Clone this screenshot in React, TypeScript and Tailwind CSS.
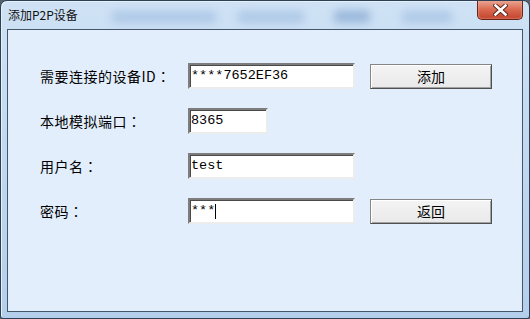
import React from "react";

const cjk = '"Noto Sans CJK SC", "Noto Sans", sans-serif';
const cjkTc = '"Noto Sans CJK TC", "Noto Sans CJK SC", sans-serif';
const mono = '"Liberation Mono", "Noto Sans CJK SC", monospace';

function Field({ w, value, caret }: { w: string; value: string; caret?: boolean }) {
  return (
    <div
      className={`${w} h-[26px] bg-white border-2 border-t-[#7d7d7d] border-l-[#7d7d7d] border-b-[#ececec] border-r-[#ececec] shadow-[inset_1px_1px_0_#4a4a4a] flex items-center pl-[1px] text-[13.5px] text-black leading-none`}
      style={{ fontFamily: mono }}
    >
      <span>{value}</span>
      {caret && <span className="w-px h-[15px] bg-black" />}
    </div>
  );
}

function Btn({ label }: { label: string }) {
  return (
    <button
      className="ml-[15px] w-[122px] h-[25px] bg-gradient-to-b from-[#f4f4f4] to-[#e9e9e9] border border-[#858585] border-b-[#4f4f4f] border-r-[#4f4f4f] shadow-[inset_1px_1px_0_#ffffff,inset_-1px_-1px_0_#a3a3a3] text-[14px] text-black flex items-center justify-center leading-none"
      style={{ fontFamily: cjk }}
    >
      {label}
    </button>
  );
}

function Row({ label, children }: { label: string; children: React.ReactNode }) {
  return (
    <div className="flex items-center h-[26px]">
      <div className="w-[150px] flex items-center text-[14px] text-black leading-none tracking-[0.5px] pl-[2px]" style={{ fontFamily: cjk }}>
        <span>{label}</span>
        <span className="w-[14px] text-center" style={{ fontFamily: cjkTc }}>：</span>
      </div>
      {children}
    </div>
  );
}

export default function App() {
  return (
    <div className="w-[530px] h-[319px] bg-[#55606c]">
      <div className="relative w-full h-full rounded-t-[7px] rounded-b-[3px] border border-[#2e4154] bg-gradient-to-b from-[#cfe2f5] via-[#c0d8f0] to-[#b4cfeb] overflow-hidden flex flex-col shadow-[inset_1px_1px_0_#e6f0fa]">
        {/* blurred background smudges behind glass */}
        <div className="absolute left-[110px] top-[10px] w-[106px] h-[12px] rounded-full bg-[#9ab9de] blur-[4px] opacity-60" />
        <div className="absolute left-[236px] top-[10px] w-[68px] h-[12px] rounded-full bg-[#9ab9de] blur-[4px] opacity-60" />
        <div className="absolute left-[332px] top-[9px] w-[38px] h-[13px] rounded-full bg-[#86a8d2] blur-[4px] opacity-70" />
        <div className="absolute left-[400px] top-[10px] w-[52px] h-[12px] rounded-full bg-[#9ab9de] blur-[4px] opacity-60" />

        {/* title bar */}
        <div className="relative h-[28px] flex items-center pl-[7px] pb-[1px]">
          <span className="text-[12px] text-[#111] leading-none" style={{ fontFamily: cjk }}>
            添加P2P设备
          </span>
          <div className="absolute right-[6px] top-[-1px] w-[46px] h-[20px] rounded-b-[5px] border border-t-0 border-[#6a2317] bg-gradient-to-b from-[#eaa999] via-[#d9694f] to-[#c2432c] shadow-[inset_0_0_2px_#f7c5b8] flex items-center justify-center">
            <svg width="15" height="12" viewBox="0 0 15 12">
              <path d="M2.5 1.5 L12.5 10.5 M12.5 1.5 L2.5 10.5" stroke="#5a2016" strokeWidth="4.4" strokeLinecap="square" />
              <path d="M2.5 1.5 L12.5 10.5 M12.5 1.5 L2.5 10.5" stroke="#ffffff" strokeWidth="2.6" strokeLinecap="square" />
            </svg>
          </div>
        </div>

        {/* client area */}
        <div className="relative mx-[6px] mb-[6px] flex-1 border border-[#44566a] bg-[#e2eefc] pl-[30px] pt-[33px] flex flex-col gap-[19px]">
          <Row label="需要连接的设备ID">
            <Field w="w-[167px]" value="****7652EF36" />
            <Btn label="添加" />
          </Row>
          <Row label="本地模拟端口">
            <Field w="w-[80px]" value="8365" />
          </Row>
          <Row label="用户名">
            <Field w="w-[167px]" value="test" />
          </Row>
          <Row label="密码">
            <Field w="w-[167px]" value="***" caret />
            <Btn label="返回" />
          </Row>
        </div>
      </div>
    </div>
  );
}
